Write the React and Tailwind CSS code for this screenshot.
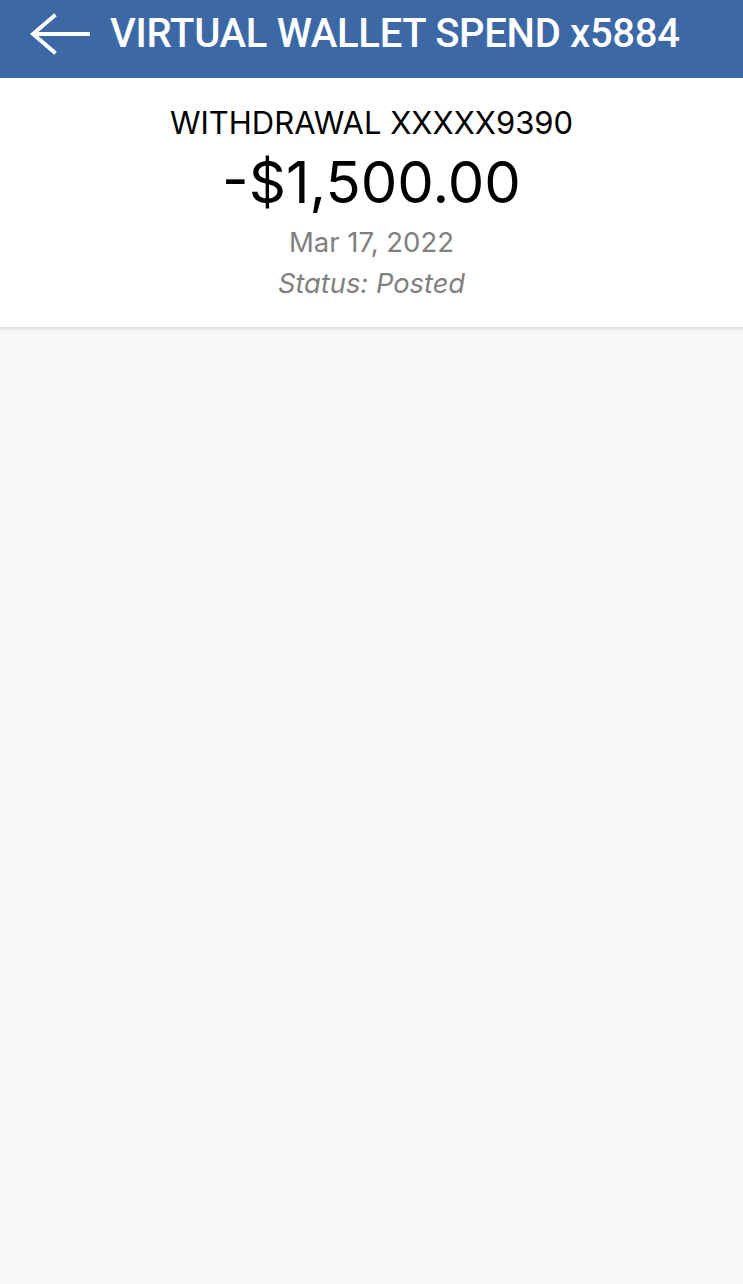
export default function App() {
    return (
        <div className="min-h-[1284px] w-full bg-[#f7f7f7] font-['Inter',sans-serif]">
            {/* Top bar */}
            <header className="h-[78px] bg-[#3c69a6] flex items-center pl-[30px] pb-[10px] gap-[20px]">
                <svg width="60" height="42" viewBox="0 0 60 42" fill="none" stroke="white" strokeWidth="4" strokeLinecap="square">
                    <path d="M4 21 H58" />
                    <path d="M24 3 L3 21 L24 39" />
                </svg>
                <h1 className="text-white text-[40px] leading-[48px] font-medium tracking-[-0.3px] font-['Roboto',sans-serif]">
                    VIRTUAL WALLET SPEND x5884
                </h1>
            </header>

            {/* Transaction summary */}
            <section className="bg-white flex flex-col items-center pt-[28px] pb-[27px] shadow-[0_2px_3px_rgba(0,0,0,0.12)]">
                <p className="text-black text-[31px] leading-[34px]">WITHDRAWAL XXXXX9390</p>
                <p className="text-black text-[58px] leading-[64px] mt-[10px]">-$1,500.00</p>
                <p className="text-[#808080] text-[27.5px] leading-[32px] mt-[12px]">Mar 17, 2022</p>
                <p className="text-[#808080] text-[27.3px] leading-[32px] mt-[10px] italic">Status: Posted</p>
            </section>
        </div>
    );
}
